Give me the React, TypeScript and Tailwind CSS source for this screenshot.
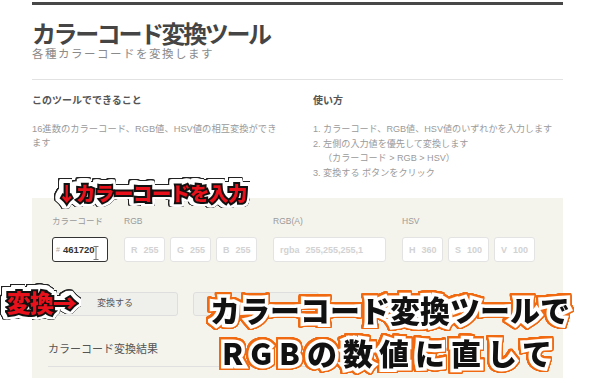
import React from "react";

const JP = '"Liberation Sans", "Noto Sans CJK JP", sans-serif';
const JPB = '"Noto Sans CJK JP", sans-serif';

function ring(c: string, d: number) {
  return [
    `drop-shadow(${d}px 0 0 ${c})`,
    `drop-shadow(-${d}px 0 0 ${c})`,
    `drop-shadow(0 ${d}px 0 ${c})`,
    `drop-shadow(0 -${d}px 0 ${c})`,
  ].join(" ");
}

function Field({ w, a, b }: { w: string; a: string; b: string }) {
  return (
    <div
      className={
        "h-[25px] rounded-[3px] border border-[#e3e3e3] bg-white flex items-center gap-[6px] pl-[6px] text-[9px] font-bold text-[#d2d2d2] " +
        w
      }
    >
      <span>{a}</span>
      <span>{b}</span>
    </div>
  );
}

export default function App() {
  const redStyle: React.CSSProperties = {
    fontFamily: JPB,
    color: "#e8101a",
    WebkitTextStroke: "4px #111",
    paintOrder: "stroke fill",
    filter: `${ring("#fff", 1.5)} ${ring("#fff", 1.5)} ${ring("#222", 0.8)}`,
  };
  const bigStyle: React.CSSProperties = {
    fontFamily: JPB,
    color: "#111",
    WebkitTextStroke: "7px #fff",
    paintOrder: "stroke fill",
    filter: `${ring("#f06a12", 1)} ${ring("#f06a12", 0.8)}`,
  };
  return (
    <div
      className="relative w-[600px] h-[378px] overflow-hidden bg-white"
      style={{ fontFamily: JP }}
    >
      <div className="ml-[32px] w-[531px]">
        <div className="mt-[2px] h-[3px] bg-[#474747]" />
        <div
          className="mt-[16px] text-[24px] leading-[24px] font-bold text-[#454545] tracking-[-2.4px]"
          style={{ fontFamily: JPB }}
        >
          カラーコード変換ツール
        </div>
        <div className="mt-[3px] text-[11.5px] leading-[13px] text-[#8a8a8a] tracking-[1.5px]">
          各種カラーコードを変換します
        </div>
        <div className="mt-[18px] h-px bg-[#e2e2e2]" />

        <div className="flex mt-[14px]">
          <div className="w-[281px]">
            <div className="text-[10px] leading-[14px] font-bold text-[#555]">
              このツールでできること
            </div>
            <div className="mt-[14px] w-[245px] text-[9.3px] leading-[14px] text-[#9a9a9a]">
              16進数のカラーコード、RGB値、HSV値の相互変換ができます
            </div>
          </div>
          <div className="flex-1">
            <div className="text-[10px] leading-[14px] font-bold text-[#555]">使い方</div>
            <div className="mt-[14px] text-[9.1px] leading-[14.5px] text-[#9a9a9a]">
              <div>1. カラーコード、RGB値、HSV値のいずれかを入力します</div>
              <div>2. 左側の入力値を優先して変換します</div>
              <div className="pl-[10px]">（カラーコード &gt; RGB &gt; HSV）</div>
              <div>3. 変換する ボタンをクリック</div>
            </div>
          </div>
        </div>

        <div className="mt-[18px] h-[200px] bg-[#f4f4ed] pl-[20px] pt-[17px]">
          <div className="flex gap-[16px] text-[8.5px] leading-[12px] text-[#9a9a9a]">
            <div className="w-[56px] flex flex-col">
              <span>カラーコード</span>
              <div className="relative mt-[10px] h-[25px] rounded-[3px] border-[1.5px] border-[#333] bg-white flex items-center pl-[3px] gap-[3px]">
                <span className="text-[7px] text-[#aaa]">#</span>
                <span className="text-[9.5px] font-bold text-[#333]">461720</span>
                <svg
                  className="absolute left-[40px] top-[8px]"
                  width="6"
                  height="14"
                  viewBox="0 0 6 14"
                >
                  <path d="M0.5 0.5h5M3 0.5v13M0.5 13.5h5" stroke="#777" strokeWidth="1" fill="none" />
                </svg>
              </div>
            </div>
            <div className="flex flex-col">
              <span>RGB</span>
              <div className="mt-[10px] flex gap-[5px]">
                <Field w="w-[41px]" a="R" b="255" />
                <Field w="w-[41px]" a="G" b="255" />
                <Field w="w-[41px]" a="B" b="255" />
              </div>
            </div>
            <div className="flex flex-col">
              <span>RGB(A)</span>
              <div className="mt-[10px] flex">
                <Field w="w-[113px]" a="rgba" b="255,255,255,1" />
              </div>
            </div>
            <div className="flex flex-col">
              <span>HSV</span>
              <div className="mt-[10px] flex gap-[5px]">
                <Field w="w-[41px]" a="H" b="360" />
                <Field w="w-[41px]" a="S" b="100" />
                <Field w="w-[41px]" a="V" b="100" />
              </div>
            </div>
          </div>

          <div className="mt-[30px] flex gap-[15px]">
            <div className="w-[126px] h-[24px] rounded-[3px] border border-[#dedede] bg-[#efefec] flex items-center justify-center text-[9px] text-[#555]">
              変換する
            </div>
            <div className="w-[126px] h-[24px] rounded-[3px] border border-[#dedede] bg-[#efefec]" />
          </div>

          <div className="mt-[25px] ml-[-4px] text-[11px] leading-[16px] text-[#555]">
            カラーコード変換結果
          </div>
          <div className="mt-[9px] ml-[-4px] h-px w-[300px] bg-[#e0e0e0]" />
        </div>
      </div>

      {/* overlay captions */}
      <div
        className="absolute left-[57px] top-[178px] text-[19.5px] leading-[30px] font-black whitespace-nowrap tracking-[-0.5px]"
        style={redStyle}
      >
        ↓カラーコードを入力
      </div>
      <div
        className="absolute left-[7px] top-[285px] text-[24px] leading-[34px] font-black whitespace-nowrap tracking-[-1px]"
        style={redStyle}
      >
        変換→
      </div>
      <div
        className="absolute left-[204px] top-[288px] w-[372px] flex flex-col items-center text-[30px] leading-[43px] font-black whitespace-nowrap"
        style={bigStyle}
      >
        <span>カラーコード変換ツールで</span>
        <span className="tracking-[6px]">
          <span className="tracking-[7px]">RGB</span>の数値に直して
        </span>
      </div>
    </div>
  );
}
